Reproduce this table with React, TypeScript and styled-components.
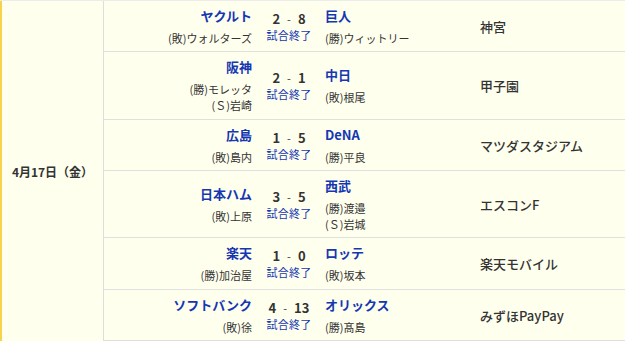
import React from "react";
import styled, { createGlobalStyle } from "styled-components";

const GlobalStyle = createGlobalStyle`
  html, body {
    margin: 0;
    padding: 0;
    background: #ffffff;
  }
  body {
    font-family: "Noto Sans CJK JP", "Noto Sans", sans-serif;
    color: #333333;
  }
`;

type Game = {
  home: string;
  homePitchers: string[];
  away: string;
  awayPitchers: string[];
  homeScore: number;
  awayScore: number;
  stadium: string;
};

const games: Game[] = [
  { home: "ヤクルト", homePitchers: ["(敗)ウォルターズ"], homeScore: 2, awayScore: 8, away: "巨人", awayPitchers: ["(勝)ウィットリー"], stadium: "神宮" },
  { home: "阪神", homePitchers: ["(勝)モレッタ", "(Ｓ)岩崎"], homeScore: 2, awayScore: 1, away: "中日", awayPitchers: ["(敗)根尾"], stadium: "甲子園" },
  { home: "広島", homePitchers: ["(敗)島内"], homeScore: 1, awayScore: 5, away: "DeNA", awayPitchers: ["(勝)平良"], stadium: "マツダスタジアム" },
  { home: "日本ハム", homePitchers: ["(敗)上原"], homeScore: 3, awayScore: 5, away: "西武", awayPitchers: ["(勝)渡邉", "(Ｓ)岩城"], stadium: "エスコンF" },
  { home: "楽天", homePitchers: ["(勝)加治屋"], homeScore: 1, awayScore: 0, away: "ロッテ", awayPitchers: ["(敗)坂本"], stadium: "楽天モバイル" },
  { home: "ソフトバンク", homePitchers: ["(敗)徐"], homeScore: 4, awayScore: 13, away: "オリックス", awayPitchers: ["(勝)髙島"], stadium: "みずほPayPay" },
];

const Table = styled.div`
  display: flex;
  width: 625px;
  height: 341px;
  box-sizing: border-box;
  background: #ffffee;
  border-top: 1px solid #ececec;
`;

const DateCell = styled.div`
  width: 101px;
  flex: none;
  border-left: 2px solid #f8d24c;
  border-right: 1px solid #dedede;
  display: flex;
  align-items: center;
  justify-content: center;
  font-size: 12px;
  font-weight: 700;
  color: #333333;
`;

const Games = styled.div`
  flex: 1;
  display: flex;
  flex-direction: column;
`;

const Row = styled.div`
  flex: 1 0 auto;
  display: grid;
  grid-template-columns: 153px 64px 155px 1fr;
  border-bottom: 1px solid #e0e0e0;
  padding: 6px 0 5px;
`;

const TeamCell = styled.div<{ $side: "left" | "right" }>`
  display: flex;
  flex-direction: column;
  justify-content: center;
  align-items: ${(p) => (p.$side === "left" ? "flex-end" : "flex-start")};
  text-align: ${(p) => (p.$side === "left" ? "right" : "left")};
  padding: ${(p) => (p.$side === "left" ? "0 5px 0 0" : "0 0 0 4px")};
`;

const TeamName = styled.div`
  font-size: 13px;
  line-height: 18px;
  font-weight: 700;
  color: #1537b3;
  margin-bottom: 5px;
`;

const Pitcher = styled.div`
  font-size: 11px;
  line-height: 16px;
  color: #333333;
`;

const ScoreCell = styled.div`
  display: flex;
  flex-direction: column;
  justify-content: center;
  align-items: center;
`;

const Score = styled.div`
  display: flex;
  align-items: center;
  gap: 7px;
  font-size: 13px;
  line-height: 18px;
  font-weight: 700;
  color: #333333;
`;

const Dash = styled.span`
  font-size: 11px;
  font-weight: 400;
`;

const Status = styled.div`
  font-size: 11px;
  line-height: 15px;
  color: #1537b3;
  letter-spacing: 0.2px;
`;

const Stadium = styled.div`
  display: flex;
  align-items: center;
  padding-left: 4px;
  font-size: 13px;
  font-weight: 500;
  color: #333333;
`;

export default function App() {
  return (
    <>
      <GlobalStyle />
      <Table>
        <DateCell>4月17日（金）</DateCell>
        <Games>
          {games.map((g) => (
            <Row key={g.home}>
              <TeamCell $side="left">
                <TeamName>{g.home}</TeamName>
                {g.homePitchers.map((p) => (
                  <Pitcher key={p}>{p}</Pitcher>
                ))}
              </TeamCell>
              <ScoreCell>
                <Score>
                  <span>{g.homeScore}</span>
                  <Dash>-</Dash>
                  <span>{g.awayScore}</span>
                </Score>
                <Status>試合終了</Status>
              </ScoreCell>
              <TeamCell $side="right">
                <TeamName>{g.away}</TeamName>
                {g.awayPitchers.map((p) => (
                  <Pitcher key={p}>{p}</Pitcher>
                ))}
              </TeamCell>
              <Stadium>{g.stadium}</Stadium>
            </Row>
          ))}
        </Games>
      </Table>
    </>
  );
}
